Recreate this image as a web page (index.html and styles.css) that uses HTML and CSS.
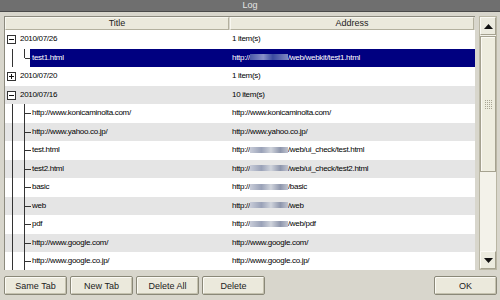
FILE: index.html
```html
<!DOCTYPE html>
<html lang="en">
<head>
  <meta charset="UTF-8" />
  <title>Log</title>
  <link rel="stylesheet" href="styles.css">
</head>
<body>
  <div class="window">
    <div class="titlebar">Log</div>

    <div class="main">
      <div class="list">
        <div class="header">
          <div class="head-cell">Title</div>
          <div class="head-cell">Address</div>
        </div>

        <div class="row">
          <div class="cell title"><span class="expander minus"></span>2010/07/26</div>
          <div class="cell">1 item(s)</div>
        </div>
        <div class="row selected">
          <div class="cell title child"><span class="tree last"></span>test1.html</div>
          <div class="cell">http://<span class="blur"></span>/web/webkit/test1.html</div>
        </div>
        <div class="row">
          <div class="cell title"><span class="expander plus"></span>2010/07/20</div>
          <div class="cell">1 item(s)</div>
        </div>
        <div class="row">
          <div class="cell title"><span class="expander minus"></span>2010/07/16</div>
          <div class="cell">10 item(s)</div>
        </div>
        <div class="row">
          <div class="cell title child"><span class="tree"></span>http://www.konicaminolta.com/</div>
          <div class="cell">http://www.konicaminolta.com/</div>
        </div>
        <div class="row">
          <div class="cell title child"><span class="tree"></span>http://www.yahoo.co.jp/</div>
          <div class="cell">http://www.yahoo.co.jp/</div>
        </div>
        <div class="row">
          <div class="cell title child"><span class="tree"></span>test.html</div>
          <div class="cell">http://<span class="blur"></span>/web/ui_check/test.html</div>
        </div>
        <div class="row">
          <div class="cell title child"><span class="tree"></span>test2.html</div>
          <div class="cell">http://<span class="blur"></span>/web/ui_check/test2.html</div>
        </div>
        <div class="row">
          <div class="cell title child"><span class="tree"></span>basic</div>
          <div class="cell">http://<span class="blur"></span>/basic</div>
        </div>
        <div class="row">
          <div class="cell title child"><span class="tree"></span>web</div>
          <div class="cell">http://<span class="blur"></span>/web</div>
        </div>
        <div class="row">
          <div class="cell title child"><span class="tree"></span>pdf</div>
          <div class="cell">http://<span class="blur"></span>/web/pdf</div>
        </div>
        <div class="row">
          <div class="cell title child"><span class="tree"></span>http://www.google.com/</div>
          <div class="cell">http://www.google.com/</div>
        </div>
        <div class="row">
          <div class="cell title child"><span class="tree"></span>http://www.google.co.jp/</div>
          <div class="cell">http://www.google.co.jp/</div>
        </div>
      </div>

      <div class="scrollbar">
        <div class="scroll-btn">
          <svg width="9" height="5" viewBox="0 0 9 5"><polygon points="4.5,0 9,5 0,5" fill="#111"/></svg>
        </div>
        <div class="track">
          <div class="thumb"><span class="grip"></span></div>
        </div>
        <div class="scroll-btn">
          <svg width="9" height="5" viewBox="0 0 9 5"><polygon points="0,0 9,0 4.5,5" fill="#111"/></svg>
        </div>
      </div>
    </div>

    <div class="footer">
      <button class="btn">Same Tab</button>
      <button class="btn">New Tab</button>
      <button class="btn">Delete All</button>
      <button class="btn">Delete</button>
      <button class="btn ok">OK</button>
    </div>
  </div>
</body>
</html>
```

FILE: styles.css
```css
:root {
  --frame: #d8d6cc;
  --line: #8c8a7e;
  --select: #000080;
  --stripe: #e5e5e5;
  --text: #000;
  --thumb: #eeeddf;
}

body {
  margin: 0;
  font-family: 'Liberation Sans', Arial, sans-serif;
  color: var(--text);
}

.window {
  width: 500px;
  height: 300px;
  background-color: var(--frame);
  overflow: hidden;
}

.titlebar {
  height: 11px;
  background-color: #6f6f6f;
  border-bottom: 1px solid #4a4a4a;
  color: #e4e4e4;
  font-size: 9px;
  line-height: 11px;
  text-align: center;
}

.main {
  display: flex;
  gap: 4px;
  height: 254px;
  padding: 4px 3px 0 4px;
}

.list {
  flex: 1;
  background-color: #fff;
  border-left: 1px solid var(--line);
  border-top: 1px solid var(--line);
  overflow: hidden;
  font-size: 8px;
  letter-spacing: -0.3px;
}

.header {
  display: grid;
  grid-template-columns: 225px 1fr;
  height: 13px;
  background-color: var(--frame);
}

.head-cell {
  background-color: #ebe9dc;
  border: 1px solid #b3b09e;
  border-top-color: #f8f7f0;
  border-left-color: #f8f7f0;
  margin-right: 1px;
  box-sizing: border-box;
  text-align: center;
  font-size: 9px;
  letter-spacing: 0;
  line-height: 11px;
  color: #222;
}

.row {
  display: grid;
  grid-template-columns: 225px 1fr;
  height: 18.5px;
  line-height: 18.5px;
}

.row:nth-of-type(odd) {
  background-color: var(--stripe);
}

/* selection starts where the title text starts */
.row.selected {
  background-color: #fff;
  color: #fff;
}

.selected .title {
  background: linear-gradient(90deg, transparent 25px, var(--select) 25px);
}

.selected .cell + .cell {
  background-color: var(--select);
}

.cell {
  position: relative;
  white-space: nowrap;
  overflow: hidden;
}

.cell + .cell {
  padding-left: 2px;
}

.title {
  padding-left: 15px;
}

.title.child {
  padding-left: 27px;
}

.expander {
  position: absolute;
  left: 2px;
  top: 5px;
  width: 7px;
  height: 7px;
  border: 1px solid #333;
  background-color: #fff;
}

.expander::before,
.expander.plus::after {
  content: "";
  position: absolute;
  background-color: #111;
}

.expander::before {
  left: 1px;
  top: 3px;
  width: 5px;
  height: 1px;
}

.expander.plus::after {
  left: 3px;
  top: 1px;
  width: 1px;
  height: 5px;
}

/* two tree columns: the root line and the child connector */
.child::before {
  content: "";
  position: absolute;
  left: 7px;
  top: 0;
  bottom: 0;
  border-left: 1px solid #333;
}

.tree {
  position: absolute;
  left: 19px;
  top: 0;
  bottom: 0;
  width: 6px;
  border-left: 1px solid #333;
}

.tree::after {
  content: "";
  position: absolute;
  left: 0;
  top: 9px;
  width: 6px;
  border-top: 1px solid #333;
}

.tree.last {
  bottom: 9px;
}

.blur {
  display: inline-block;
  background: linear-gradient(90deg, #c8ccd8, #9aa2b8 30%, #d0d4dc 55%, #8e96ac 80%, #c0c4d0);
  height: 6px;
  width: 38px;
  vertical-align: middle;
  filter: blur(0.6px);
}

.selected .blur {
  background: linear-gradient(90deg, #4a5aa8, #8890c8 35%, #3a4aa0 60%, #8088c0);
}

.scrollbar {
  width: 18px;
  display: flex;
  flex-direction: column;
  background-color: #f3f2ea;
  border: 1px solid #b9b6a4;
  box-sizing: border-box;
}

.scroll-btn {
  height: 18px;
  display: flex;
  align-items: center;
  justify-content: center;
  background-color: #ecebdf;
  border: 1px solid #a5a290;
  border-top-color: #fbfaf4;
  border-left-color: #fbfaf4;
  box-sizing: border-box;
}

.track {
  flex: 1;
  padding-top: 1px;
}

.thumb {
  height: 136px;
  background-color: var(--thumb);
  border: 1px solid #a5a290;
  box-shadow: inset 1px 1px 0 #fbfaf4;
  box-sizing: border-box;
  display: flex;
  align-items: center;
  justify-content: center;
}

.grip {
  width: 7px;
  height: 9px;
  background-image:
    linear-gradient(180deg, transparent 1px, var(--thumb) 1px),
    linear-gradient(90deg, #a8a594 1px, transparent 1px);
  background-size: 2px 2px;
}

.footer {
  display: flex;
  gap: 3px;
  padding: 6px 3px 0 4px;
}

.btn {
  width: 63px;
  height: 19px;
  padding: 0;
  font-family: 'Liberation Sans', Arial, sans-serif;
  font-size: 9px;
  color: #222;
  background-color: #ebe9dc;
  border: 1px solid #8a8878;
  border-radius: 2px;
  box-shadow: inset 1px 1px 0 #fbfaf4, inset -1px -1px 0 #c4c1ae;
}

.btn.ok {
  margin-left: auto;
}
```
